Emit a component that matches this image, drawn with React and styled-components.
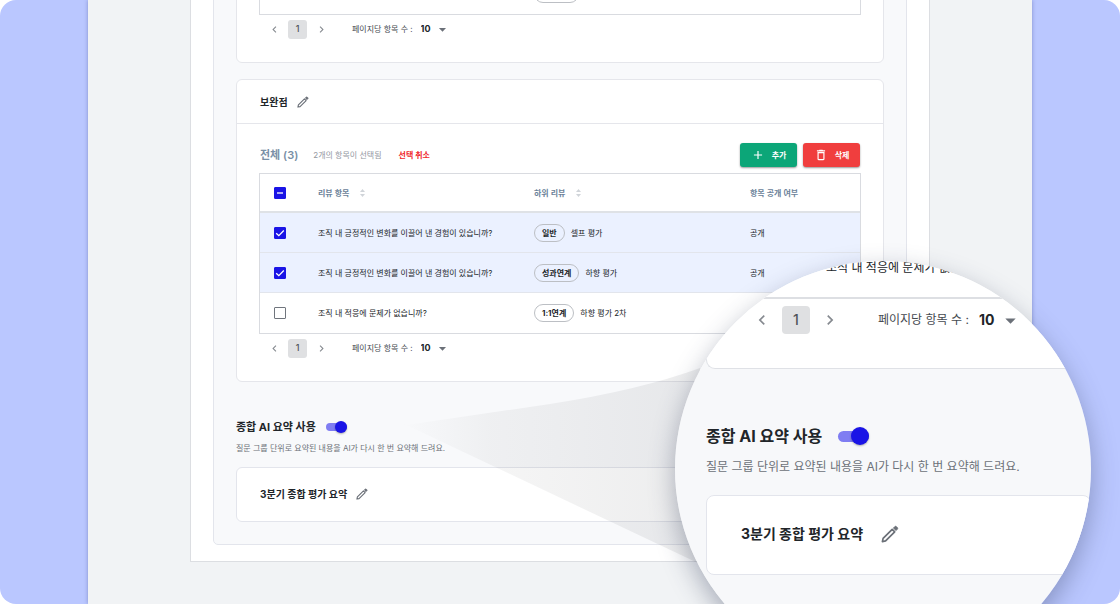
import { useState } from "react";
import styled, { createGlobalStyle, css } from "styled-components";
import { MdAdd, MdArrowDropDown, MdChevronLeft, MdChevronRight, MdDeleteOutline } from "react-icons/md";

const GlobalStyle = createGlobalStyle`
  * {
    box-sizing: border-box;
  }

  body {
    margin: 0;
    background: #ffffff;
    color: #212529;
    font-family: Inter, "Noto Sans CJK KR", sans-serif;
    font-size: 8px;
    line-height: 12px;
  }

  button,
  select,
  input {
    margin: 0;
    padding: 0;
    border: 0;
    background: none;
    color: inherit;
    font: inherit;
    cursor: pointer;
  }
`;

const Frame = styled.main`
  position: relative;
  height: 100vh;
  padding: 0 88px;
  border-radius: 16px;
  overflow: hidden;
  background: #bac7ff;
`;

// the page is scrolled to its end, so the content hangs from the bottom
const Screen = styled.div`
  display: flex;
  flex-direction: column;
  justify-content: flex-end;
  height: 100%;
  padding: 0 102px 42px;
  background: #f1f3f5;
  box-shadow: 0 0 4px rgba(60, 70, 140, 0.45);
`;

const Sheet = styled.div`
  padding: 0 22px 16px;
  border: 1px solid #dcdee2;
  background: #ffffff;
`;

const Panel = styled.div`
  padding: 22px;
  border: 1px solid #e3e5ec;
  border-radius: 5px;
  background: #f8f9fb;
`;

const Card = styled.section`
  margin-bottom: 16px;
  border: 1px solid #e5e6eb;
  border-radius: 6px;
  background: #ffffff;
`;

const CardHeader = styled.header`
  display: flex;
  align-items: center;
  gap: 9px;
  height: 44px;
  padding: 0 23px;
  border-bottom: 1px solid #e5e6eb;
`;

const CardBody = styled.div`
  padding: 19px 22px;
`;

const CardTitle = styled.h3`
  margin: 0;
  font-size: ${(props) => (props.$large ? "14px" : "10px")};
  line-height: ${(props) => (props.$large ? "20px" : "14px")};
  font-weight: 700;
`;

const IconButton = styled.button`
  display: flex;
  align-items: center;
  justify-content: center;
  color: #6b7078;
`;

const Toolbar = styled.div`
  display: flex;
  align-items: center;
  margin-bottom: 6px;
  padding: 0 1px;
`;

const Total = styled.h4`
  margin: 0 15px 0 0;
  color: #7a90a6;
  font-size: 11px;
  line-height: 16px;
  font-weight: 600;
`;

const Selected = styled.span`
  color: #93979f;
`;

const CancelButton = styled.button`
  margin-left: 17px;
  color: #f0282d;
  font-weight: 700;
`;

const Actions = styled.div`
  display: flex;
  gap: 6px;
  margin-left: auto;
`;

const ActionButton = styled.button`
  display: flex;
  align-items: center;
  justify-content: center;
  gap: 7px;
  width: 57px;
  height: 24px;
  border-radius: 3px;
  background: ${(props) => (props.$danger ? "#f03e3e" : "#0ca678")};
  box-shadow: 0 1px 2px rgba(0, 0, 0, 0.4);
  color: #ffffff;
  font-weight: 700;
`;

const Table = styled.table`
  width: 100%;
  border: 1px solid #d9dbe0;
  border-spacing: 0;
  table-layout: fixed;

  th,
  td {
    height: 40px;
    padding: 0 0 0 12px;
    text-align: left;
    border-bottom: 1px solid #e2e5ec;
  }

  th {
    height: 39px;
    border-bottom: 2px solid #dfe2e6;
    color: #6b8299;
    font-weight: 600;
  }

  th:first-child,
  td:first-child {
    width: 46px;
    padding-left: 14px;
  }

  tr:last-child td {
    border-bottom: 0;
  }
`;

const Row = styled.tr`
  background: ${(props) => (props.$checked ? "#ebf1ff" : "#ffffff")};
`;

const Col = styled.col`
  width: ${(props) => props.$width};
`;

const Sortable = styled.span`
  display: flex;
  align-items: center;
  gap: 11px;
`;

const Review = styled.div`
  display: flex;
  align-items: center;
  gap: 6px;
`;

const Badge = styled.span`
  height: 18px;
  padding: 0 7px;
  border: 1px solid #bcbfc4;
  border-radius: 9px;
  line-height: 16px;
  font-weight: 700;
`;

const CheckLabel = styled.label`
  display: grid;
  width: 12px;
  height: 12px;

  input,
  svg {
    grid-area: 1 / 1;
    width: 12px;
    height: 12px;
  }

  input {
    appearance: none;
    border: 1px solid #70757d;
    border-radius: 1px;
  }

  svg {
    pointer-events: none;
  }

  ${(props) =>
    props.$filled &&
    css`
      input {
        border-color: #1a14e6;
        background: #1a14e6;
      }
    `}
`;

const Pager = styled.nav`
  display: flex;
  align-items: center;
  gap: ${(props) => (props.$large ? "6px" : "4px")};
  height: ${(props) => (props.$large ? "42px" : "28px")};
  padding-left: ${(props) => (props.$large ? "41px" : "5px")};
  font-size: ${(props) => (props.$large ? "12px" : "8px")};

  ${IconButton} {
    width: ${(props) => (props.$large ? "28px" : "20px")};
    color: #868a90;
  }
`;

const PageButton = styled.button`
  width: ${(props) => (props.$large ? "28px" : "19px")};
  height: ${(props) => (props.$large ? "28px" : "19px")};
  border-radius: ${(props) => (props.$large ? "4px" : "3px")};
  background: #dfe0e2;
  color: #50545a;
  font-size: ${(props) => (props.$large ? "14px" : "9px")};
  font-weight: 500;
`;

const PageSize = styled.label`
  display: flex;
  align-items: center;
  gap: ${(props) => (props.$large ? "10px" : "8px")};
  margin-left: ${(props) => (props.$large ? "28px" : "17px")};
  color: #454a50;
`;

const SelectBox = styled.span`
  display: grid;
  align-items: center;

  select,
  svg {
    grid-area: 1 / 1;
  }

  select {
    appearance: none;
    width: ${(props) => (props.$large ? "44px" : "30px")};
    color: #212529;
    font-size: ${(props) => (props.$large ? "14px" : "9px")};
    font-weight: 700;
  }

  svg {
    justify-self: end;
    pointer-events: none;
    color: #6b7078;
  }
`;

const SummaryTitle = styled.div`
  display: flex;
  align-items: center;
  gap: ${(props) => (props.$large ? "16px" : "10px")};
  margin-top: ${(props) => (props.$large ? "54px" : "36px")};

  h2 {
    margin: 0;
    font-size: ${(props) => (props.$large ? "16px" : "11px")};
    line-height: ${(props) => (props.$large ? "26px" : "18px")};
    font-weight: 700;
  }
`;

const SummaryText = styled.p`
  margin: ${(props) => (props.$large ? "8px 0 18px" : "5px 0 12px")};
  color: #6c7178;
  font-size: ${(props) => (props.$large ? "12px" : "8px")};
  line-height: ${(props) => (props.$large ? "20px" : "14px")};
`;

const SummaryCard = styled.div`
  display: flex;
  align-items: center;
  gap: ${(props) => (props.$large ? "18px" : "9px")};
  height: ${(props) => (props.$large ? "80px" : "55px")};
  padding: 0 ${(props) => (props.$large ? "34px" : "23px")} 2px;
  border: 1px solid #e3e5ec;
  border-radius: ${(props) => (props.$large ? "8px" : "6px")};
  background: #ffffff;
`;

const Switch = styled.input`
  appearance: none;
  display: flex;
  align-items: center;
  width: ${(props) => (props.$large ? "31px" : "21px")};
  height: ${(props) => (props.$large ? "11px" : "8px")};
  border-radius: 6px;
  background: #c4c7cc;

  &::before {
    content: "";
    width: ${(props) => (props.$large ? "18px" : "12px")};
    height: ${(props) => (props.$large ? "18px" : "12px")};
    flex: none;
    border-radius: 50%;
    background: #ffffff;
    box-shadow: 0 1px 2px rgba(0, 0, 0, 0.3);
  }

  &:checked {
    justify-content: flex-end;
    background: #7f7df2;
  }

  &:checked::before {
    background: #1a14e6;
  }
`;

const Beam = styled.svg`
  position: absolute;
  right: 420px;
  bottom: 40px;
  width: 300px;
  height: 200px;
  pointer-events: none;
`;

const Lens = styled.aside`
  position: absolute;
  right: 29px;
  bottom: -73px;
  width: 416px;
  height: 416px;
  padding-left: 31px;
  border-radius: 50%;
  overflow: hidden;
  background: #f7f8fa;
`;

const LensShadow = styled.div`
  position: absolute;
  right: 29px;
  bottom: -73px;
  width: 416px;
  height: 416px;
  border-radius: 50%;
  box-shadow: 0 10px 26px rgba(50, 60, 90, 0.38);
`;

const LensCard = styled.div`
  height: 108px;
  border: solid #dfe1e6;
  border-width: 0 0 1px 1px;
  border-radius: 0 0 0 9px;
  background: #ffffff;
`;

const LensRow = styled.p`
  height: 38px;
  margin: 0;
  padding-left: 119px;
  border-bottom: 2px solid #dddfe3;
  font-size: 12px;
  line-height: 14px;
`;

const rows = [
  { id: 1, question: "조직 내 긍정적인 변화를 이끌어 낸 경험이 있습니까?", badge: "일반", review: "셀프 평가" },
  { id: 2, question: "조직 내 긍정적인 변화를 이끌어 낸 경험이 있습니까?", badge: "성과연계", review: "하향 평가" },
  { id: 3, question: "조직 내 적응에 문제가 없습니까?", badge: "1:1연계", review: "하향 평가 2차" },
];

const Pencil = ({ size }) => (
  <svg width={size} height={size} viewBox="0 0 18 18" fill="none" stroke="currentColor" strokeWidth="1.7">
    <path d="M1.4 16.6 2.1 13.4 11.2 4.3 13.7 6.8 4.6 15.9Z" strokeLinejoin="round" />
    <path d="M12.5 3 13.9 1.6Q14.6 1 15.3 1.6L16.4 2.7Q17 3.4 16.4 4.1L15 5.5Z" fill="currentColor" strokeWidth="1" />
  </svg>
);

const SortIcon = () => (
  <svg width="5" height="8" viewBox="0 0 5 8" fill="#d0d4d9">
    <path d="M2.5 0 5 3H0Z" />
    <path d="M2.5 8 0 5H5Z" />
  </svg>
);

const Check = ({ label, checked, mixed, onChange }) => (
  <CheckLabel $filled={checked || mixed}>
    <input type="checkbox" aria-label={label} checked={checked} onChange={onChange} />
    {(checked || mixed) && (
      <svg viewBox="0 0 12 12" fill="none" stroke="#ffffff" strokeWidth="1.3">
        <path d={mixed ? "M3 6H9" : "M2.2 6.2 4.8 8.7 9.8 3.5"} />
      </svg>
    )}
  </CheckLabel>
);

const Pagination = ({ large }) => (
  <Pager $large={large}>
    <IconButton aria-label="이전">
      <MdChevronLeft size={large ? 20 : 13} />
    </IconButton>
    <PageButton $large={large}>1</PageButton>
    <IconButton aria-label="다음">
      <MdChevronRight size={large ? 20 : 13} />
    </IconButton>
    <PageSize $large={large}>
      페이지당 항목 수 :
      <SelectBox $large={large}>
        <select defaultValue="10">
          <option>10</option>
          <option>20</option>
        </select>
        <MdArrowDropDown size={large ? 25 : 17} />
      </SelectBox>
    </PageSize>
  </Pager>
);

const ReviewRow = ({ row, checked, onChange }) => (
  <Row $checked={checked}>
    <td>
      <Check label={row.question} checked={checked} onChange={onChange} />
    </td>
    <td>{row.question}</td>
    <td>
      <Review>
        <Badge>{row.badge}</Badge>
        {row.review}
      </Review>
    </td>
    <td>공개</td>
  </Row>
);

const Columns = () => (
  <colgroup>
    <Col $width="46px" />
    <Col $width="36%" />
    <Col $width="36%" />
    <Col />
  </colgroup>
);

const Summary = ({ large }) => {
  const [on, setOn] = useState(true);
  return (
    <>
      <SummaryTitle $large={large}>
        <h2>종합 AI 요약 사용</h2>
        <Switch
          $large={large}
          type="checkbox"
          role="switch"
          aria-label="종합 AI 요약 사용"
          checked={on}
          onChange={() => setOn(!on)}
        />
      </SummaryTitle>
      <SummaryText $large={large}>질문 그룹 단위로 요약된 내용을 AI가 다시 한 번 요약해 드려요.</SummaryText>
      <SummaryCard $large={large}>
        <CardTitle $large={large}>3분기 종합 평가 요약</CardTitle>
        <IconButton aria-label="수정">
          <Pencil size={large ? 18 : 12} />
        </IconButton>
      </SummaryCard>
    </>
  );
};

const App = () => {
  const [checked, setChecked] = useState([1, 2]);

  const toggle = (id) =>
    setChecked(checked.includes(id) ? checked.filter((item) => item !== id) : [...checked, id]);

  const all = checked.length === rows.length;

  return (
    <>
      <GlobalStyle />
      <Frame>
        <Screen>
          <Sheet>
            <Panel>
              <Card>
                <CardBody>
                  <Table>
                    <Columns />
                    <tbody>
                      <ReviewRow row={rows[1]} checked={false} onChange={() => {}} />
                    </tbody>
                  </Table>
                  <Pagination />
                </CardBody>
              </Card>
              <Card>
                <CardHeader>
                  <CardTitle>보완점</CardTitle>
                  <IconButton aria-label="수정">
                    <Pencil size={12} />
                  </IconButton>
                </CardHeader>
                <CardBody>
                  <Toolbar>
                    <Total>전체 ({rows.length})</Total>
                    <Selected>{checked.length}개의 항목이 선택됨</Selected>
                    <CancelButton onClick={() => setChecked([])}>선택 취소</CancelButton>
                    <Actions>
                      <ActionButton>
                        <MdAdd size={14} />
                        추가
                      </ActionButton>
                      <ActionButton $danger>
                        <MdDeleteOutline size={14} />
                        삭제
                      </ActionButton>
                    </Actions>
                  </Toolbar>
                  <Table>
                    <Columns />
                    <thead>
                      <tr>
                        <th>
                          <Check
                            label="전체 선택"
                            checked={all}
                            mixed={!all && checked.length > 0}
                            onChange={() => setChecked(all ? [] : rows.map((row) => row.id))}
                          />
                        </th>
                        <th>
                          <Sortable>
                            리뷰 항목 <SortIcon />
                          </Sortable>
                        </th>
                        <th>
                          <Sortable>
                            하위 리뷰 <SortIcon />
                          </Sortable>
                        </th>
                        <th>항목 공개 여부</th>
                      </tr>
                    </thead>
                    <tbody>
                      {rows.map((row) => (
                        <ReviewRow
                          key={row.id}
                          row={row}
                          checked={checked.includes(row.id)}
                          onChange={() => toggle(row.id)}
                        />
                      ))}
                    </tbody>
                  </Table>
                  <Pagination />
                </CardBody>
              </Card>
              <Summary />
            </Panel>
          </Sheet>
        </Screen>

        <LensShadow />
        <Beam viewBox="0 0 300 200">
          <defs>
            <linearGradient id="beam" x1="0" x2="1" y1="0" y2="0">
              <stop offset="0" stopColor="#3c3c3c" stopOpacity="0" />
              <stop offset="0.3" stopColor="#3c3c3c" stopOpacity="0.05" />
              <stop offset="1" stopColor="#30343c" stopOpacity="0.09" />
            </linearGradient>
          </defs>
          <path d="M0 62 150 40Q240 26 300 4V200L0 58Z" fill="url(#beam)" />
        </Beam>
        <Lens>
          <LensCard>
            <LensRow>조직 내 적응에 문제가 없습니까?</LensRow>
            <Pagination large />
          </LensCard>
          <Summary large />
        </Lens>
      </Frame>
    </>
  );
};

export default App;
